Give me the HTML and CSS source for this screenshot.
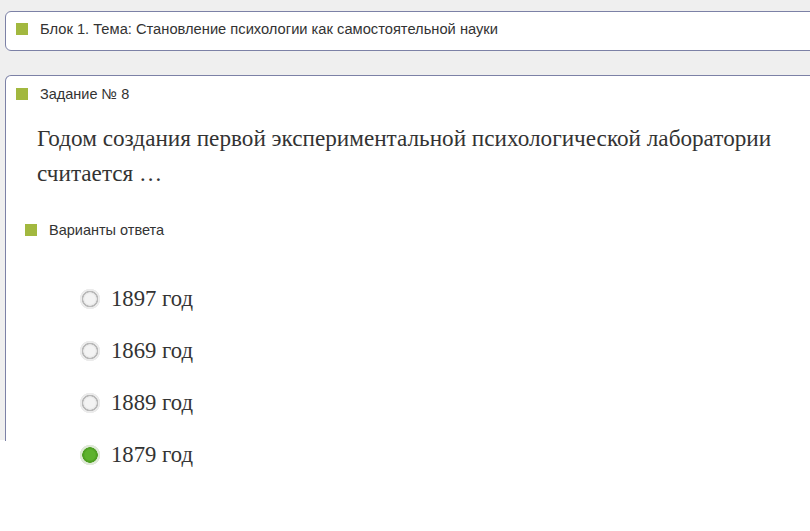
FILE: index.html
```html
<!DOCTYPE html>
<html lang="ru">
<head>
<meta charset="utf-8">
<title>Задание № 8</title>
<link rel="stylesheet" href="styles.css">
</head>
<body>
<div class="page">
  <div class="panel block">
    <div class="caption"><span class="marker"></span>Блок 1. Тема: Становление психологии как самостоятельной науки</div>
  </div>
  <div class="panel task">
    <div class="caption"><span class="marker"></span>Задание № 8</div>
    <p class="question">Годом создания первой экспериментальной психологической лаборатории считается …</p>
    <div class="caption sub"><span class="marker"></span>Варианты ответа</div>
    <ul class="answers">
      <li class="answer"><span class="radio"></span>1897 год</li>
      <li class="answer"><span class="radio"></span>1869 год</li>
      <li class="answer"><span class="radio"></span>1889 год</li>
      <li class="answer"><span class="radio checked"></span>1879 год</li>
    </ul>
  </div>
</div>
</body>
</html>
```
FILE: styles.css
```css
body {
  margin: 0;
  padding: 0;
  min-height: 531px;
  background: #ffffff;
}

.page {
  height: 440px;
  box-sizing: border-box;
  padding: 11px 0 0 5px;
  background: #efefef;
  overflow-x: clip;
  font-family: "Liberation Sans", Arial, sans-serif;
  color: #333333;
}

.panel {
  background: #ffffff;
  border: 1px solid #7c81a6;
  border-radius: 6px;
  margin-right: -30px;
}

.block {
  display: flex;
  align-items: center;
  padding-bottom: 5px;
  box-sizing: border-box;
  height: 40px;
}

.task {
  margin-top: 24px;
  height: 365px;
  border-bottom: none;
  border-radius: 6px 6px 0 0;
}

.caption {
  display: flex;
  align-items: center;
  gap: 12px;
  padding-left: 10px;
  font-size: 14.5px;
  line-height: 18px;
}

.block .caption {
  font-size: 14.7px;
}

.task > .caption:first-child {
  padding-top: 9px;
}

.marker {
  width: 12px;
  height: 12px;
  background: #a2b83f;
  flex: none;
}

.question {
  margin: 18px 20px 0 31px;
  font-family: "Liberation Serif", "Times New Roman", serif;
  font-size: 23.2px;
  line-height: 35px;
  color: #333333;
}

.sub {
  margin-top: 30px;
  padding-left: 19px;
}

.answers {
  list-style: none;
  margin: 34px 0 0 0;
  padding: 0 0 0 73px;
}

.answer {
  display: flex;
  align-items: center;
  gap: 10px;
  height: 52px;
  font-family: "Liberation Serif", "Times New Roman", serif;
  font-size: 22.7px;
  color: #333333;
}

/* radio button: light fill, thin grey ring and a soft outer halo */
.radio {
  width: 22px;
  height: 22px;
  border-radius: 50%;
  background: radial-gradient(circle, #f3f3f3 0 5px, #e6e6e6 6.5px, #b9b9b9 7px 8px, #ebebeb 8.5px 10px, transparent 10.5px);
  flex: none;
}

.radio.checked {
  background: radial-gradient(circle, #5db22d 0 5px, #4fa023 6.5px 7.5px, #dfe9d8 8px 10px, transparent 10.5px);
}
```
